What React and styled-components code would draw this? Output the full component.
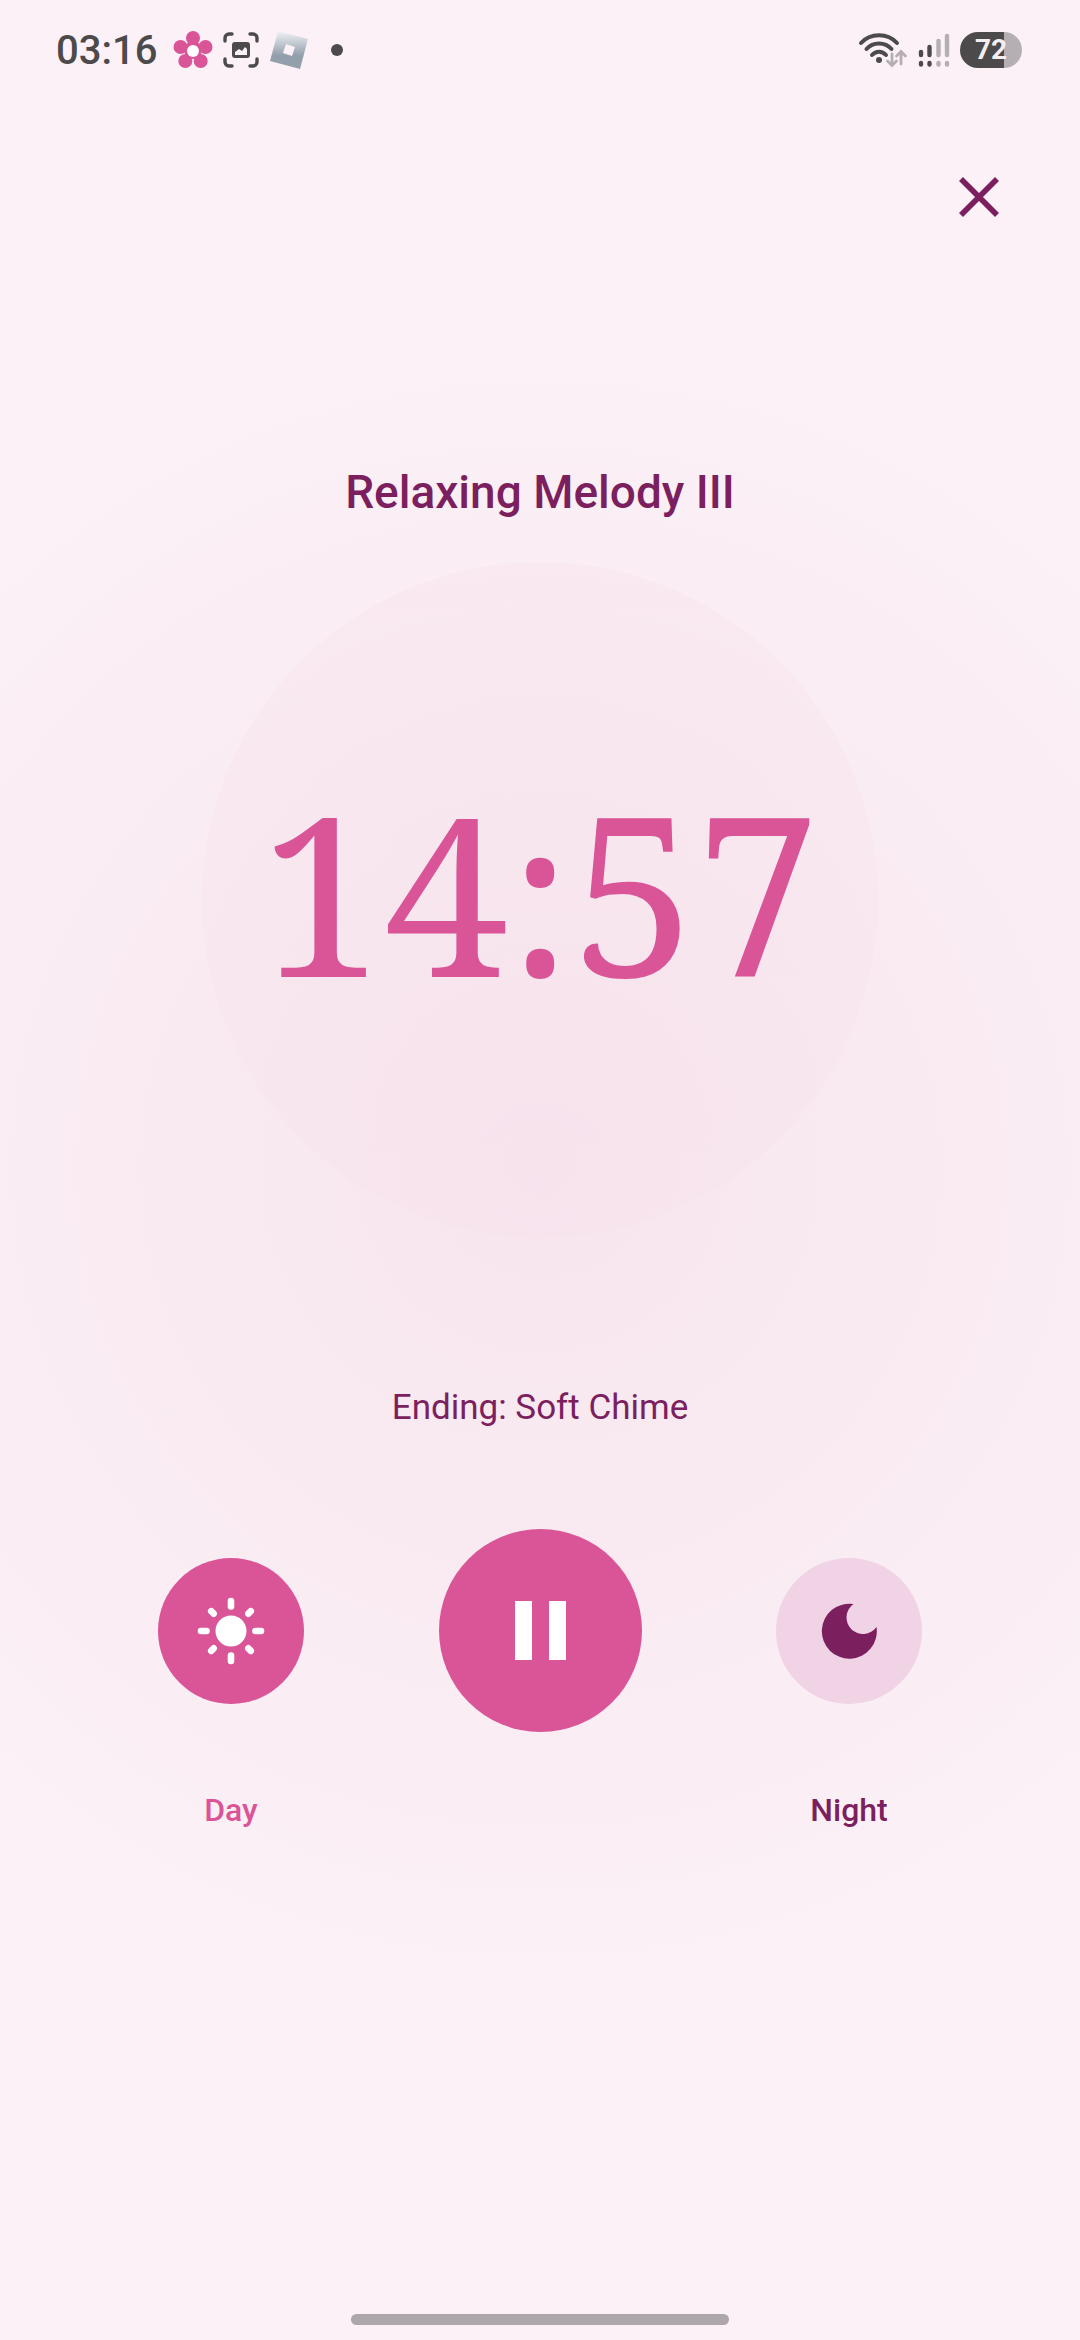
import React, { useState } from "react";
import styled, { createGlobalStyle } from "styled-components";

const INK = "#7b1f5e";
const PINK = "#da5597";
const STATUS = "#4c4a4b";
const FAINT = "#b5afb3";

function StatusBar () {
    return (
        <Bar>
            <BarGroup>
                <Clock>03:16</Clock>
                <svg width="40" height="40" viewBox="0 0 40 40" fill={PINK}>
                    <circle cx="20" cy="8" r="7"/>
                    <circle cx="32.500" cy="17" r="7"/>
                    <circle cx="27.700" cy="31" r="7"/>
                    <circle cx="12.300" cy="31" r="7"/>
                    <circle cx="7.500" cy="17" r="7"/>
                    <circle cx="20" cy="20" r="9"/>
                    <circle cx="20" cy="21" r="6" fill="#fff"/>
                </svg>
                <svg width="36" height="36" viewBox="0 0 36 36" fill="none" stroke={STATUS} strokeWidth="3.400" strokeLinecap="round">
                    <path d="M2 9V6a4 4 0 0 1 4-4h3M27 2h3a4 4 0 0 1 4 4v3M34 27v3a4 4 0 0 1-4 4h-3M9 34H6a4 4 0 0 1-4-4v-3"/>
                    <rect x="9" y="10" width="18" height="16" rx="3" fill={STATUS} stroke="none"/>
                    <path d="M12 23v-3l4-3 3 2 3-4 2 2v6z" fill="#fbf1f7" stroke="none"/>
                </svg>
                <svg width="40" height="40" viewBox="0 0 40 40">
                    <defs>
                        <linearGradient id="tile" x1="0" y1="0" x2="0" y2="1">
                            <stop offset="0" stopColor="#f1f3f5"/>
                            <stop offset="0.65" stopColor="#929eab"/>
                            <stop offset="1" stopColor="#94a0ac"/>
                        </linearGradient>
                    </defs>
                    <path fillRule="evenodd" fill="url(#tile)" d="M9 1l30 8-8 30-30-8zM17 14l-3 9 9 3 3-9z"/>
                </svg>
                <Dot/>
            </BarGroup>
            <BarGroup>
                <svg width="50" height="38" viewBox="0 0 50 38" fill="none" stroke={STATUS} strokeWidth="4" strokeLinecap="round">
                    <path d="M3 12c9-10.500 27-10.500 36 0M8.500 18c6.500-7.500 18.500-7.500 25 0M14 24c4-4.500 10-4.500 14 0"/>
                    <circle cx="21" cy="29" r="3" fill={STATUS} stroke="none"/>
                    <path d="M34 23v11M29.500 30l4.500 4.500 4.500-4.500M43 33V21M38.500 25l4.500-4.500 4.500 4.500" stroke={FAINT} strokeWidth="2.800"/>
                </svg>
                <svg width="32" height="36" viewBox="0 0 32 36" strokeWidth="4.400" strokeLinecap="round">
                    <path d="M3 20v3M3 31v1.500M11.500 15v8M11.500 31v1.500" stroke={STATUS}/>
                    <path d="M20.500 9v14M20.500 31v1.500M29 4v19M29 31v1.500" stroke={FAINT}/>
                </svg>
                <Battery>72</Battery>
            </BarGroup>
        </Bar>
    );
};

function SunIcon () {
    return (
        <svg width="68" height="68" viewBox="-34 -34 68 68" fill="#fff" stroke="#fff" strokeWidth="6.600" strokeLinecap="round">
            <circle r="15.500" stroke="none"/>
            {[0, 45, 90, 135, 180, 225, 270, 315].map((deg) => (
                <path key={deg} d={deg % 90 ? "M0-24.500v-3.500" : "M0-24.500v-5.500"} transform={`rotate(${deg})`}/>
            ))}
        </svg>
    );
}

function MoonIcon () {
    return (
        <svg width="56" height="56" viewBox="0 0 56 56" fill={INK}>
            <path d="M32.500 1A16.500 16.500 0 1 0 55.500 24A27.500 27.500 0 1 1 32.500 1z"/>
        </svg>
    );
}

function App () {
    const [mode, setMode] = useState("day");
    const [playing, setPlaying] = useState(true);

    return (
        <Screen>
            <GlobalStyle/>
            <StatusBar/>
            <Top>
                <CloseButton aria-label="Close">
                    <svg width="40" height="40" viewBox="0 0 40 40" stroke={INK} strokeWidth="5.600">
                        <path d="M2 2l36 36M38 2L2 38"/>
                    </svg>
                </CloseButton>
            </Top>

            <Title>Relaxing Melody III</Title>
            <Dial>
                <Time>14:57</Time>
            </Dial>
            <Ending>Ending: Soft Chime</Ending>

            <Controls>
                <RoundButton id="day" $size={146} $active={mode === "day"} onClick={() => {setMode("day")}}>
                    <SunIcon/>
                </RoundButton>
                <RoundButton aria-label={playing ? "Pause" : "Play"} $size={203} $active onClick={() => {setPlaying(!playing)}}>
                    <svg width="51" height="59" viewBox="0 0 51 59" fill="#fff">
                        {playing ? <path d="M0 0h17v59H0zM34 0h17v59H34z"/> : <path d="M3 0l48 29.500L3 59z"/>}
                    </svg>
                </RoundButton>
                <RoundButton id="night" $size={146} $active={mode === "night"} onClick={() => {setMode("night")}}>
                    <MoonIcon/>
                </RoundButton>
            </Controls>
            <Labels>
                <ModeLabel htmlFor="day" $active={mode === "day"}>Day</ModeLabel>
                <ModeLabel htmlFor="night" $active={mode === "night"}>Night</ModeLabel>
            </Labels>
            <HomeBar/>
        </Screen>
    );
};

const GlobalStyle = createGlobalStyle`
    * {
        box-sizing: border-box;
    }
    body {
        margin: 0;
        background: #fbf1f7;
        font-family: Roboto, sans-serif;
    }
`

const Screen = styled.main`
    display: flex;
    flex-direction: column;
    align-items: center;
    min-height: 100vh;
    background: radial-gradient(circle 820px at 50% 1170px, #f7e5ee 0%, #f9eaf1 45%, #fbf1f7 100%);
`

const Bar = styled.header`
    display: flex;
    justify-content: space-between;
    align-items: center;
    width: 100%;
    height: 100px;
    padding: 0 58px 0 56px;
`

const BarGroup = styled.div`
    display: flex;
    align-items: center;
    gap: 10px;
`

const Clock = styled.span`
    margin-right: 6px;
    font-size: 40px;
    font-weight: 500;
    color: ${STATUS};
`

const Dot = styled.span`
    width: 12px;
    height: 12px;
    margin-left: 12px;
    border-radius: 50%;
    background: ${STATUS};
`

const Battery = styled.span`
    width: 62px;
    height: 36px;
    border-radius: 18px;
    background: linear-gradient(90deg, ${STATUS} 71%, ${FAINT} 71%);
    color: #f4eef2;
    font-size: 28px;
    font-weight: 700;
    line-height: 36px;
    text-align: center;
`

const Top = styled.div`
    display: flex;
    justify-content: flex-end;
    width: 100%;
    padding: 49px 53px 0;
`

const CloseButton = styled.button`
    display: flex;
    align-items: center;
    justify-content: center;
    width: 96px;
    height: 96px;
    padding: 0;
    border: none;
    background: none;
    cursor: pointer;
`

const Title = styled.h1`
    margin: 217px 0 0;
    color: ${INK};
    font-size: 46px;
    font-weight: 500;
    line-height: 60px;
`

const Dial = styled.div`
    display: flex;
    align-items: center;
    justify-content: center;
    width: 676px;
    height: 676px;
    margin-top: 40px;
    padding-bottom: 18px;
    border-radius: 50%;
    background: linear-gradient(rgba(218, 85, 151, 0.032), rgba(218, 85, 151, 0.01));
`

const Time = styled.time`
    color: ${PINK};
    font-family: "Noto Serif", "Liberation Serif", serif;
    font-size: 222px;
    line-height: 280px;
`

const Ending = styled.p`
    margin: 148px 0 0;
    color: ${INK};
    font-size: 35px;
    line-height: 44px;
`

const Controls = styled.div`
    display: flex;
    justify-content: space-between;
    align-items: center;
    width: 100%;
    margin-top: 99px;
    padding: 0 158px;
`

const RoundButton = styled.button`
    display: flex;
    align-items: center;
    justify-content: center;
    width: ${({$size}) => $size}px;
    height: ${({$size}) => $size}px;
    padding: 0;
    border: none;
    border-radius: 50%;
    background: ${({$active}) => $active ? PINK : "#f0d3e5"};
    cursor: pointer;
`

const Labels = styled.div`
    display: flex;
    justify-content: space-between;
    width: 100%;
    margin-top: 58px;
    padding: 0 158px;
`

const ModeLabel = styled.label`
    width: 146px;
    color: ${({$active}) => $active ? PINK : INK};
    font-size: 32px;
    font-weight: 500;
    line-height: 40px;
    text-align: center;
`

const HomeBar = styled.div`
    width: 35%;
    height: 11px;
    margin: auto 0 15px;
    border-radius: 6px;
    background: #ada6aa;
`

export default App;
